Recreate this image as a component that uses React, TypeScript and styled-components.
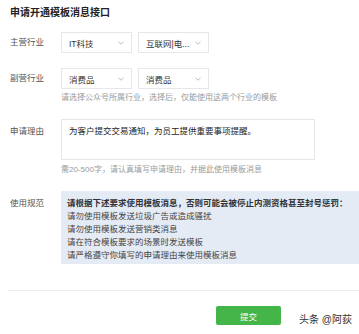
import React from 'react'
import styled, { createGlobalStyle } from 'styled-components'

const GlobalStyle = createGlobalStyle`
  html, body {
    margin: 0;
    padding: 0;
    background: #fff;
  }
  body {
    font-family: "Liberation Sans", "Noto Sans CJK SC", sans-serif;
    color: #333;
    width: 359px;
    height: 334px;
    overflow: hidden;
  }
`

interface SelectProps {
  value: string
}

const rules = [
  '请勿使用模板发送垃圾广告或造成骚扰',
  '请勿使用模板发送营销类消息',
  '请在符合模板要求的场景时发送模板',
  '请严格遵守你填写的申请理由来使用模板消息'
]

const Select = ({ value }: SelectProps) => (
  <SelectBox>
    <span>{value}</span>
    <Arrow viewBox="0 0 6 4">
      <path d="M0.5 0.8 L3 3.2 L5.5 0.8" fill="none" stroke="#b5b5b5" strokeWidth="0.9" />
    </Arrow>
  </SelectBox>
)

const App = () => {
  return (
    <>
      <GlobalStyle />
      <Page>
        <Title>申请开通模板消息接口</Title>

        <Row gap={18}>
          <Label>主营行业</Label>
          <Field>
            <Selects>
              <Select value="IT科技" />
              <Select value="互联网|电..." />
            </Selects>
          </Field>
        </Row>

        <Row gap={18}>
          <Label>副营行业</Label>
          <Field>
            <Selects>
              <Select value="消费品" />
              <Select value="消费品" />
            </Selects>
            <Hint>请选择公众号所属行业，选择后，仅能使用这两个行业的模板</Hint>
          </Field>
        </Row>

        <Row gap={15}>
          <Label top={6}>申请理由</Label>
          <Field>
            <TextArea>为客户提交交易通知，为员工提供重要事项提醒。</TextArea>
            <Hint>需20-500字，请认真填写申请理由，并据此使用模板消息</Hint>
          </Field>
        </Row>

        <Row gap={15}>
          <Label top={6}>使用规范</Label>
          <Field>
            <RuleBox>
              <strong>请根据下述要求使用模板消息，否则可能会被停止内测资格甚至封号惩罚：</strong>
              {rules.map(rule => (
                <p key={rule}>{rule}</p>
              ))}
            </RuleBox>
          </Field>
        </Row>

        <Footer>
          <SubmitButton>提交</SubmitButton>
          <Watermark>头条 @阿荻</Watermark>
        </Footer>
      </Page>
    </>
  )
}

const Page = styled.div`
  display: flex;
  flex-direction: column;
  padding: 6px 0 0 10px;
`

const Title = styled.h1`
  margin: 0 0 12px;
  font-size: 10px;
  line-height: 14px;
  font-weight: bold;
  color: #222;
`

const Row = styled.div<{ gap: number }>`
  display: grid;
  grid-template-columns: 51px 1fr;
  align-items: start;
  & + & {
    margin-top: ${({ gap }) => gap}px;
  }
`

const Label = styled.div<{ top?: number }>`
  padding-top: ${({ top }) => top ?? 4}px;
  font-size: 8.5px;
  line-height: 12px;
  color: #555;
`

const Field = styled.div`
  display: flex;
  flex-direction: column;
  min-width: 0;
`

const Selects = styled.div`
  display: flex;
  gap: 6px;
`

const SelectBox = styled.div`
  display: flex;
  align-items: center;
  justify-content: space-between;
  box-sizing: border-box;
  width: 71px;
  height: 21px;
  padding: 0 7px 0 7px;
  border: 1px solid #e7e7eb;
  background: #fff;
  font-size: 8.5px;
  color: #333;
`

const Arrow = styled.svg`
  width: 6px;
  height: 4px;
`

const Hint = styled.p`
  margin: 3px 0 0;
  font-size: 8px;
  line-height: 12px;
  color: #9a9a9a;
`

const TextArea = styled.div`
  box-sizing: border-box;
  width: 254px;
  height: 41px;
  padding: 5px 7px;
  border: 1px solid #e7e7eb;
  font-size: 8.5px;
  line-height: 12px;
  color: #222;

  & + ${Hint} {
    margin-top: 4px;
  }
`

const RuleBox = styled.div`
  box-sizing: border-box;
  height: 73px;
  padding: 6px 6px 2px;
  background: #e4ebf5;
  font-size: 8.5px;
  line-height: 13px;
  color: #444;
  white-space: nowrap;

  strong {
    display: block;
    color: #333;
  }

  p {
    margin: 0;
  }
`

const Footer = styled.div`
  display: flex;
  align-items: center;
  justify-content: flex-end;
  margin: 26px 0 0 -2px;
  padding: 14px 7px 0 0;
  border-top: 1px solid #ececec;
`

const SubmitButton = styled.button`
  width: 65px;
  height: 19px;
  margin-right: 18px;
  padding: 0;
  border: none;
  border-radius: 2px;
  background: #44b549;
  color: #fff;
  font-family: inherit;
  font-size: 8.5px;
`

const Watermark = styled.span`
  margin-top: 6px;
  font-size: 10px;
  color: #333;
`

export default App
